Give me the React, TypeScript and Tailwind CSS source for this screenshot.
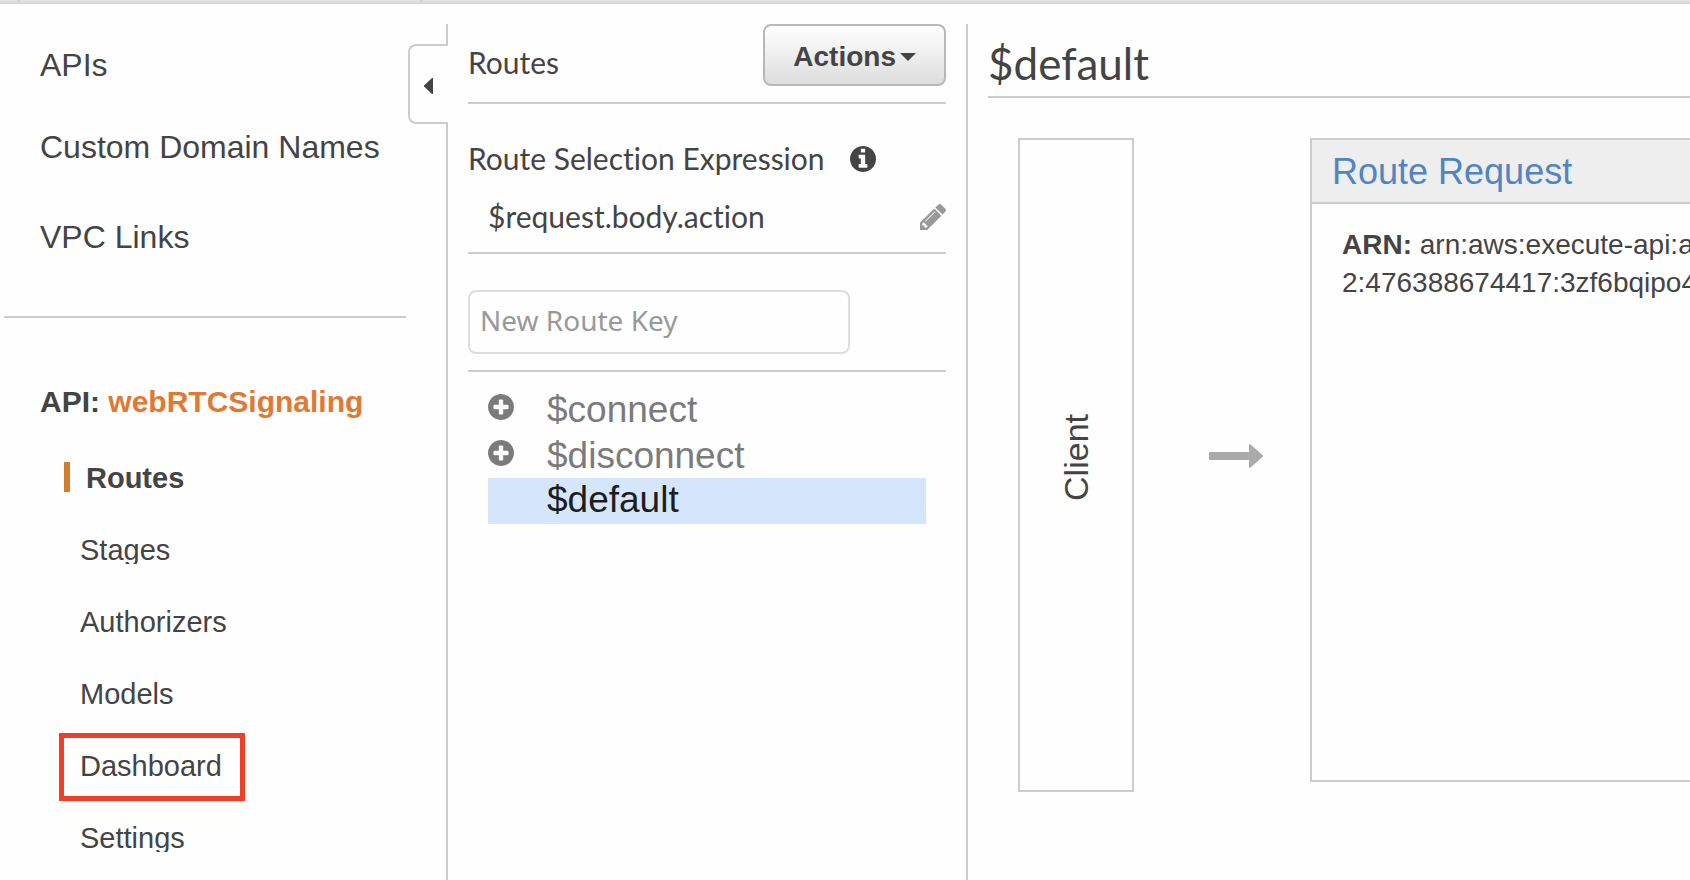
import React from "react";

const CIRCLE =
  "M1664 896q0 209-103 385.5t-279.5 279.5-385.5 103-385.5-103-279.5-279.5-103-385.5 103-385.5 279.5-279.5 385.5-103 385.5 103 279.5 279.5 103 385.5z";

function InfoIcon() {
  return (
    <svg viewBox="128 128 1536 1536" className="size-[26px] fill-current" aria-hidden="true">
      <path
        d={
          "M1152 1376v-160q0-14-9-23t-23-9h-96v-512q0-14-9-23t-23-9h-320q-14 0-23 9t-9 23v160q0 14 9 23t23 9h96v320h-96q-14 0-23 9t-9 23v160q0 14 9 23t23 9h448q14 0 23-9t9-23zM1024 480v-160q0-14-9-23t-23-9h-192q-14 0-23 9t-9 23v160q0 14 9 23t23 9h192q14 0 23-9t9-23z" +
          CIRCLE
        }
      />
    </svg>
  );
}

function PlusIcon() {
  return (
    <svg viewBox="128 128 1536 1536" className="size-[26px] fill-current" aria-hidden="true">
      <path
        d={
          "M1344 960v-128q0-26-19-45t-45-19h-256v-256q0-26-19-45t-45-19h-128q-26 0-45 19t-19 45v256h-256q-26 0-45 19t-19 45v128q0 26 19 45t45 19h256v256q0 26 19 45t45 19h128q26 0 45-19t19-45v-256h256q26 0 45-19t19-45z" +
          CIRCLE
        }
      />
    </svg>
  );
}

function PencilIcon() {
  return (
    <svg viewBox="0 149 1515 1515" className="size-[26px] fill-current" aria-hidden="true">
      <path d="M363 1536l91-91-235-235-91 91v107h128v128h107zM886 608q0-22-22-22-10 0-17 7l-542 542q-7 7-7 17 0 22 22 22 10 0 17-7l542-542q7-7 7-17zM832 416l416 416-832 832h-416v-416zM1515 512q0 53-37 90l-166 166-416-416 166-165q36-38 90-38 53 0 91 38l235 234q37 39 37 91z" />
    </svg>
  );
}

const subItems = ["Stages", "Authorizers", "Models", "Dashboard", "Settings"];

function Sidebar() {
  return (
    <nav className="flex w-[408px] shrink-0 flex-col text-[32px] leading-[38px]">
      <a href="#apis" className="ml-10 mt-[22px]">
        APIs
      </a>
      <a href="#domains" className="ml-10 mt-11 whitespace-nowrap">
        Custom Domain Names
      </a>
      <a href="#vpc" className="ml-10 mt-[52px]">
        VPC Links
      </a>
      <hr className="ml-1 mr-0.5 mt-[60px] border-t-2 border-[#ccc]" />
      <h2 className="ml-10 mt-[68px] text-[30px] font-bold leading-8">
        API: <span className="text-[#e07932]">webRTCSignaling</span>
      </h2>
      <ul className="mt-11 flex flex-col gap-[42px] text-[29px] leading-8">
        <li className="ml-16 h-[30px] border-l-[6px] border-[#d17d2d] pl-4 font-bold">
          <a href="#routes">Routes</a>
        </li>
        {subItems.map((item) => (
          <li key={item} className="relative ml-20 h-[30px]">
            <a href={"#" + item.toLowerCase()} className="block h-[30px] overflow-hidden">
              {item}
            </a>
            {item === "Dashboard" && (
              <span className="absolute -left-[21px] -top-[17px] h-[68px] w-[186px] border-[5px] border-[#ee4027]" />
            )}
          </li>
        ))}
      </ul>
    </nav>
  );
}

function CollapseRail() {
  return (
    <div className="flex w-10 shrink-0 flex-col">
      <div className="h-5 border-r-2 border-[#ccc]" />
      <button
        type="button"
        aria-label="Collapse"
        className="flex h-20 items-center rounded-l-lg border-y-2 border-l-2 border-[#ccc] pl-3.5 pt-1"
      >
        <svg viewBox="0 0 9 16" className="h-4 w-[9px] fill-current" aria-hidden="true">
          <path d="M9 0v16h-1L0 8.5v-1L8 0z" />
        </svg>
      </button>
      <div className="-mt-px flex-1 border-r-2 border-[#ccc]" />
    </div>
  );
}

const routes = [
  { name: "$connect", selected: false },
  { name: "$disconnect", selected: false },
  { name: "$default", selected: true },
];

function RoutesPanel() {
  return (
    <section className="w-[520px] shrink-0 border-r-2 border-[#ccc] px-5">
      <div className="flex h-20 items-start justify-between border-b-2 border-[#ccc]">
        <h2 className="mt-5 font-[Lato] text-[30px] leading-9">Routes</h2>
        <button
          type="button"
          className="flex h-[62px] items-center gap-1 rounded-lg border-2 border-[#b8b8b8] bg-linear-to-b from-white to-[#ddd] px-7 pt-1 text-[28px] font-bold"
        >
          Actions
          <svg viewBox="0 0 16 8" className="h-2 w-4 fill-current" aria-hidden="true">
            <path d="M0 0h16L8 8z" />
          </svg>
        </button>
      </div>
      <div className="h-[150px] border-b-2 border-[#ccc] pt-9 font-[Lato] text-[30px] leading-9 [font-variant-ligatures:none]">
        <div className="flex items-center gap-[25px]">
          <h3 className="whitespace-nowrap">Route Selection Expression</h3>
          <button type="button" aria-label="About route selection expressions" className="pt-0.5">
            <InfoIcon />
          </button>
        </div>
        <div className="mt-[22px] flex items-center justify-between pl-5">
          <span>$request.body.action</span>
          <button type="button" aria-label="Edit expression" className="pt-0.5 text-[#999]">
            <PencilIcon />
          </button>
        </div>
      </div>
      <div className="h-[118px] border-b-2 border-[#ccc] pt-9">
        <input
          type="text"
          aria-label="New Route Key"
          placeholder="New Route Key"
          className="h-16 w-[382px] rounded-lg border-2 border-[#ddd] px-2.5 pb-1 font-['Noto_Sans'] text-[28px] outline-none placeholder:text-[#999]"
        />
      </div>
      <ul className="mx-5 mt-3.5 text-[37px]">
        {routes.map((route) => (
          <li
            key={route.name}
            className={
              route.selected
                ? "flex h-[46px] bg-[#d5e6fc] leading-[44px] text-[#1b1d1f]"
                : "flex h-[46px] leading-[48px] text-[#7b7b7b]"
            }
          >
            <div className="flex w-[59px] items-center pb-1">
              {!route.selected && (
                <button type="button" aria-label={"Expand " + route.name}>
                  <PlusIcon />
                </button>
              )}
            </div>
            <a href={"#" + route.name}>{route.name}</a>
          </li>
        ))}
      </ul>
    </section>
  );
}

function RouteDetail() {
  return (
    <main className="min-w-0 flex-1 overflow-hidden pl-5">
      <h1 className="h-[74px] border-b-2 border-[#ccc] pt-3 font-[Lato] text-[44px] leading-[54px]">
        $default
      </h1>
      <div className="ml-[30px] mt-10 flex items-start">
        <div className="flex h-[654px] w-[116px] shrink-0 items-center justify-center border-2 border-[#ccc]">
          <span className="rotate-180 pt-4 text-[34px] leading-9 [writing-mode:vertical-rl]">
            Client
          </span>
        </div>
        <div className="mt-[306px] flex w-44 shrink-0 justify-center pl-7">
          <svg viewBox="0 0 54 24" className="h-6 w-[54px] fill-[#aaa]" aria-hidden="true">
            <path d="M1 8H40V1Q40 0 41.5 .5L54 11.5V12.5L41.5 23.500Q40 24 40 23V16H1Q0 16 0 15V9Q0 8 1 8z" />
          </svg>
        </div>
        <article className="h-[644px] min-w-0 flex-1 border-y-2 border-l-2 border-[#ccc]">
          <h2 className="h-16 border-b-2 border-[#ccc] bg-[#eee] pl-5 text-4xl leading-[64px] text-[#5184c4]">
            <a href="#route-request">Route Request</a>
          </h2>
          <p className="whitespace-nowrap pl-[30px] pt-[22px] text-[28px] leading-[38px]">
            <b>ARN:</b> arn:aws:execute-api:a
            <br />
            2:476388674417:3zf6bqipo4
          </p>
        </article>
      </div>
    </main>
  );
}

export default function App() {
  return (
    <div className="flex h-screen flex-col overflow-hidden bg-[#fefefe] font-['Liberation_Sans',Arial,sans-serif] text-[#444]">
      <header className="h-1 shrink-0 border-b-2 border-[#d7d7d7] bg-[#e1e1e1]">
        <div className="ml-[18px] h-0.5 w-[404px] border-x-2 border-[#ccc]" />
      </header>
      <div className="flex min-h-0 flex-1 pt-5">
        <Sidebar />
        <CollapseRail />
        <RoutesPanel />
        <RouteDetail />
      </div>
    </div>
  );
}
